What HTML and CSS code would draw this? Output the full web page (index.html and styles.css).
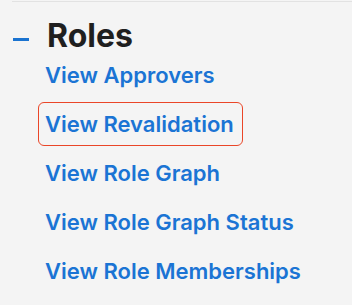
FILE: index.html
```html
<!DOCTYPE html>
<html>
<head>
<meta charset="utf-8">
<link rel="stylesheet" href="styles.css">
</head>
<body>
<div class="panel">
  <div class="section-head">
    <span class="toggle"></span>
    <h2 class="title">Roles</h2>
  </div>
  <ul class="links">
    <li><a class="link" href="#">View Approvers</a></li>
    <li><a class="link focused" href="#">View Revalidation</a></li>
    <li><a class="link" href="#">View Role Graph</a></li>
    <li><a class="link" href="#">View Role Graph Status</a></li>
    <li><a class="link" href="#">View Role Memberships</a></li>
  </ul>
</div>
</body>
</html>
```

FILE: styles.css
```css
html, body {
  margin: 0;
  padding: 0;
  background: #f4f4f4;
  font-family: Inter, "Noto Sans", sans-serif;
}
.panel {
  margin-left: 12px;
  margin-top: 1px;
  border-top: 1px solid #e2e2e2;
  height: 303px;
  overflow: hidden;
}
.section-head {
  display: flex;
  align-items: flex-start;
  height: 32px;
  margin-top: 18px;
}
.toggle {
  width: 16px;
  height: 3px;
  background: #1a73d0;
  margin-top: 18px;
  margin-left: 1px;
  margin-right: 18px;
}
.title {
  margin: 0;
  font-size: 32px;
  line-height: 32px;
  font-weight: 700;
  color: #1f1f1f;
}
.links {
  list-style: none;
  margin: 1px 0 0;
  padding: 0 0 0 26px;
  display: flex;
  flex-direction: column;
  align-items: flex-start;
  gap: 5px;
}
.link {
  display: inline-block;
  padding: 10px 8px 10px 6px;
  border: 1px solid transparent;
  border-radius: 6px;
  font-size: 22px;
  line-height: 22px;
  font-weight: 600;
  color: #1b74d4;
  text-decoration: none;
}
.focused {
  border-color: #ea4628;
}
```
